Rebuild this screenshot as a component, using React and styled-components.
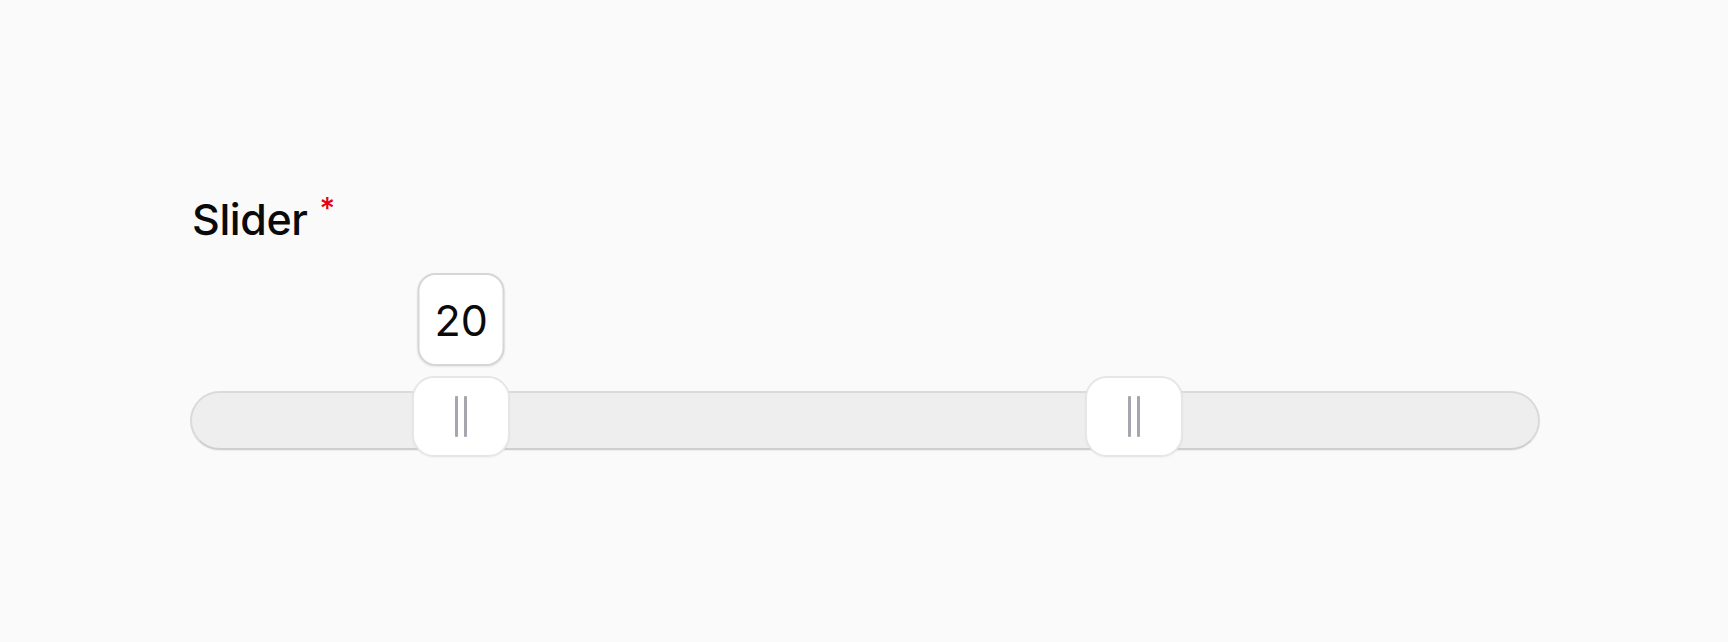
import React from "react";
import styled, { createGlobalStyle } from "styled-components";

const GlobalStyle = createGlobalStyle`
  html, body {
    margin: 0;
    padding: 0;
    background: #fafafa;
  }
  body {
    font-family: Inter, "Noto Sans", "Liberation Sans", sans-serif;
    color: #0a0a0a;
  }
`;

const Page = styled.div`
  width: 1728px;
  height: 642px;
  box-sizing: border-box;
  padding: 197px 0 0 190px;
`;

const Field = styled.div`
  display: flex;
  flex-direction: column;
  width: 1350px;
`;

const Label = styled.label`
  display: flex;
  align-items: flex-start;
  gap: 12px;
  margin-left: 2px;
  font-size: 43px;
  line-height: 44px;
  font-weight: 450;
  letter-spacing: -0.4px;
`;

const Required = styled.span`
  color: #e7000b;
  font-size: 30px;
  line-height: 30px;
  margin-top: -4px;
`;

const Track = styled.div`
  position: relative;
  margin-top: 150px;
  height: 59px;
  box-sizing: border-box;
  border: 2px solid #dadada;
  border-bottom-color: #cfcfcf;
  border-radius: 30px;
  background: #eeeeee;
  box-shadow: 0 1px 1px rgba(0, 0, 0, 0.05);
`;

const Thumb = styled.div`
  position: absolute;
  top: -17px;
  width: 98px;
  height: 81px;
  box-sizing: border-box;
  margin-left: -49px;
  border: 2px solid #e6e6e6;
  border-radius: 22px;
  background: #ffffff;
  display: flex;
  align-items: center;
  justify-content: center;
  gap: 6px;
  box-shadow: 0 1px 2px rgba(0, 0, 0, 0.04);
`;

const Grip = styled.span`
  width: 3px;
  height: 41px;
  background: #a6a6ae;
  border-radius: 1px;
`;

const Tooltip = styled.div`
  position: absolute;
  bottom: calc(100% + 12px);
  left: 50%;
  transform: translateX(-50%);
  width: 87px;
  height: 93px;
  box-sizing: border-box;
  border: 2px solid #d6d6d6;
  border-radius: 18px;
  background: #ffffff;
  box-shadow: 0 1px 2px rgba(0, 0, 0, 0.08);
  display: flex;
  align-items: center;
  justify-content: center;
  font-size: 43px;
  font-weight: 400;
  color: #0a0a0a;
`;

const values = [20, 70];

export default function App() {
  return (
    <>
      <GlobalStyle />
      <Page>
        <Field>
          <Label>
            Slider
            <Required>*</Required>
          </Label>
          <Track>
            {values.map((v, i) => (
              <Thumb key={i} style={{ left: `${v}%` }}>
                {i === 0 && <Tooltip>{v}</Tooltip>}
                <Grip />
                <Grip />
              </Thumb>
            ))}
          </Track>
        </Field>
      </Page>
    </>
  );
}
